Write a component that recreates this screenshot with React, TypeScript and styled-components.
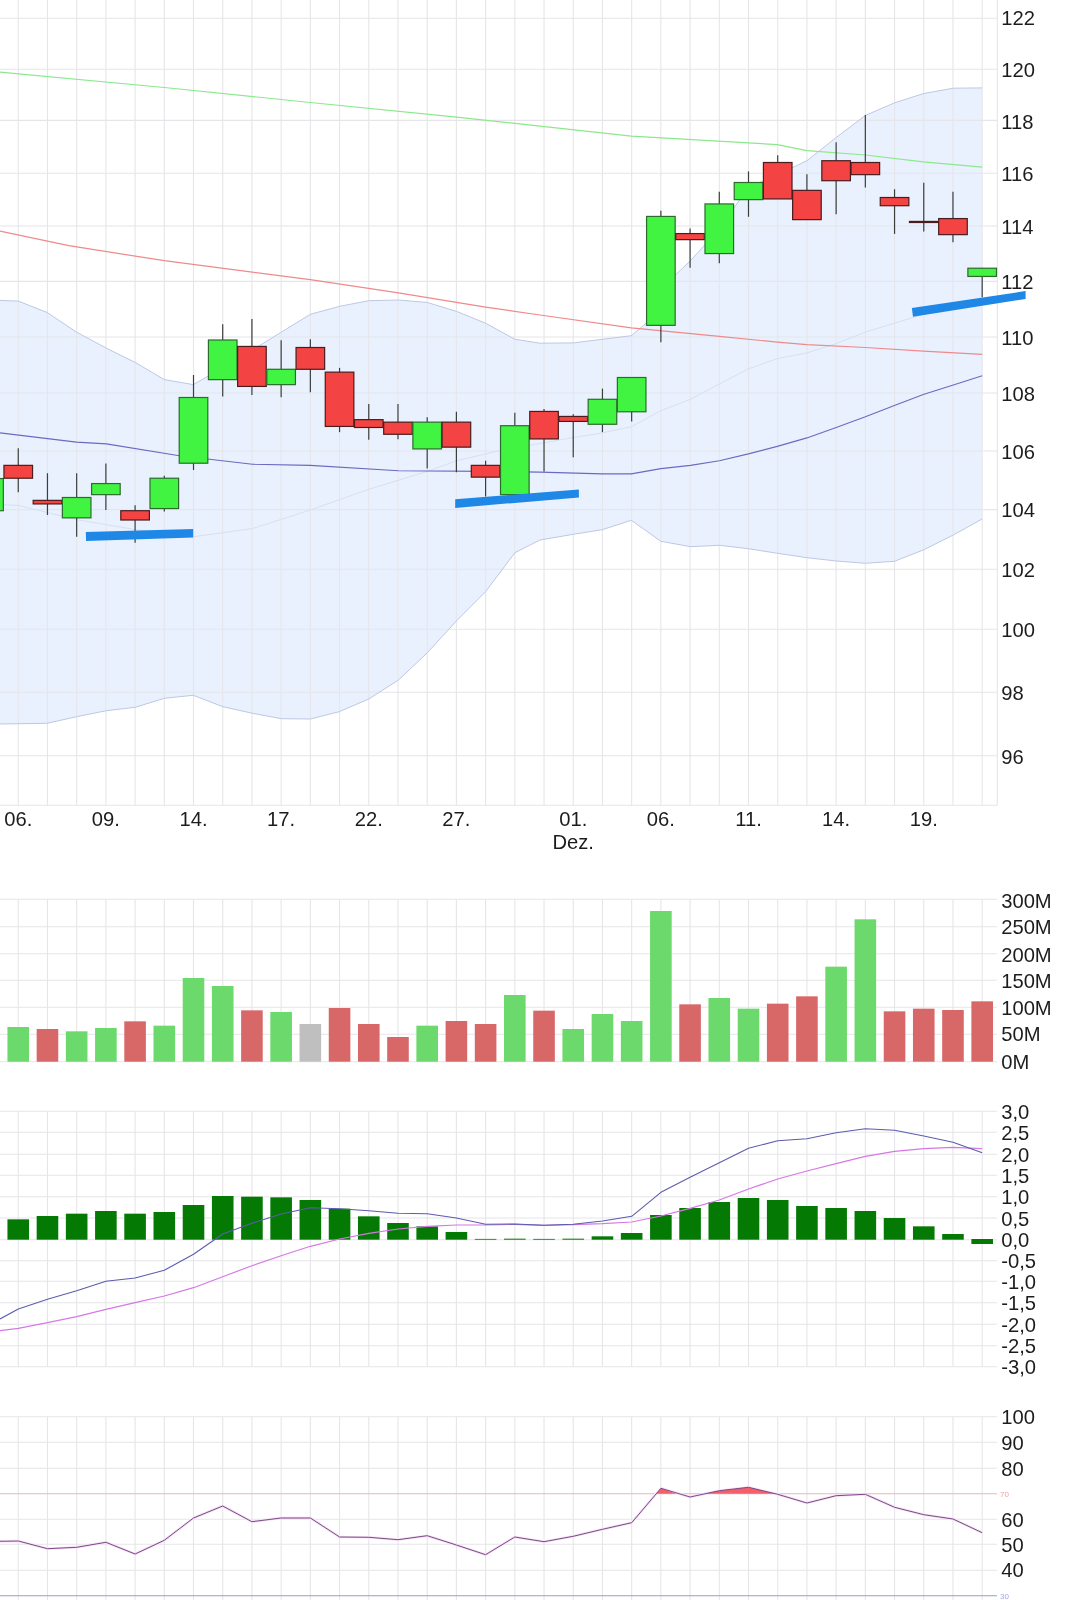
import React from "react";
import styled, { createGlobalStyle } from "styled-components";

const GlobalStyle = createGlobalStyle`
  html, body { margin: 0; padding: 0; background: #fff; }
  #root { width: 1080px; height: 1600px; overflow: hidden; }
`;

const Page = styled.main`
  display: flex;
  flex-direction: column;
  width: 1080px;
  height: 1600px;
  background: #ffffff;
`;

const Panel = styled.section<{ $height: number }>`
  flex: 0 0 ${(p) => p.$height}px;
  height: ${(p) => p.$height}px;
`;

const ChartSvg = styled.svg`
  display: block;
  width: 1080px;
  height: 100%;
  filter: blur(0.4px);
`;

const AxisLabel = styled.text`
  font-family: "Liberation Sans", Arial, sans-serif;
  font-size: 20.2px;
  fill: #1c1c1c;
`;

const TickLabel = styled(AxisLabel)`
  text-anchor: middle;
`;

const LimitLabel = styled.text<{ $color: string }>`
  font-family: "Liberation Sans", Arial, sans-serif;
  font-size: 8px;
  fill: ${(p) => p.$color};
`;

const GridLine = styled.line<{ $color?: string }>`
  stroke: ${(p) => p.$color ?? "#e6e6ea"};
  stroke-width: 1.1;
`;

const Series = styled.polyline<{ $color: string; $width?: number }>`
  fill: none;
  stroke: ${(p) => p.$color};
  stroke-width: ${(p) => p.$width ?? 1};
  stroke-linejoin: round;
`;

const Band = styled.polygon`
  fill: #e9f1fe;
`;

const Wick = styled.line`
  stroke: #3a3f3a;
  stroke-width: 1.2;
`;

const CandleBody = styled.rect<{ $up: boolean }>`
  fill: ${(p) => (p.$up ? "#42f442" : "#f44343")};
  stroke: ${(p) => (p.$up ? "#2c6b2c" : "#4a1c1c")};
  stroke-width: 1.2;
`;

const TrendStroke = styled.polygon`
  fill: #1f87e6;
`;

const VolumeBar = styled.rect<{ $kind: "u" | "d" | "n" }>`
  fill: ${(p) => (p.$kind === "u" ? "#6bd96b" : p.$kind === "d" ? "#d86868" : "#bfbfbf")};
`;

const HistBar = styled.rect`
  fill: #047a04;
`;

const Overbought = styled.polygon`
  fill: #f55f6a;
`;

type Pt = [number, number];
const X_S = 1568 / 540;
const Y_S = 2.8;
const colX = (i: number) => 18.25 + 29.21 * i;
const COLS = Array.from({ length: 34 }, (_, i) => i);

const z1 = (a: number[]): Pt[] => {
  const o: Pt[] = [];
  for (let i = 0; i < a.length; i += 2) o.push([a[i] / X_S, a[i + 1] / Y_S]);
  return o;
};
const z2 = (a: number[]): Pt[] => {
  const o: Pt[] = [];
  for (let i = 0; i < a.length; i += 2) o.push([540 + a[i] / X_S, a[i + 1] / Y_S]);
  return o;
};
const z3 = (a: number[], off: number, base = 0): Pt[] => {
  const o: Pt[] = [];
  for (let i = 0; i < a.length; i += 2) o.push([base + a[i] / X_S, off + a[i + 1] / 3]);
  return o;
};
const pts = (p: Pt[]) => p.map(([x, y]) => `${x.toFixed(1)},${y.toFixed(1)}`).join(" ");

const MAIN_GRID: [string, number, number][] = [
  ["122", 18.2, 18.6], ["120", 69.3, 70.4], ["118", 120.4, 121.8], ["116", 173.2, 174.3],
  ["114", 226, 227.5], ["112", 281.4, 282.5], ["110", 337, 338.2], ["108", 393, 394.6],
  ["106", 451, 452], ["104", 509.6, 510.7], ["102", 569.3, 570], ["100", 629.3, 630.7],
  ["98", 692.3, 693.3], ["96", 755.7, 757],
];

const TICKS: [string, number][] = [
  ["06.", 0], ["09.", 3], ["14.", 6], ["17.", 9], ["22.", 12], ["27.", 15],
  ["01.", 19], ["06.", 22], ["11.", 25], ["14.", 28], ["19.", 31],
];

const greenLine = [...z1([0,202, 477,245, 901,287, 1326,328]), ...z2([0,353, 265,381, 689,405, 775,422, 945,434, 1113,453, 1284,468])];
const redLine = [...z1([0,647, 200,688, 477,730, 901,783, 1157,820, 1410,860]), ...z2([0,882, 265,918, 521,942, 689,958, 775,965, 945,973, 1113,983, 1284,992])];
const midLine = [...z1([0,1212, 222,1238, 309,1243, 521,1276, 733,1300, 901,1303, 1157,1318, 1410,1320]), ...z2([0,1322, 181,1327, 265,1327, 351,1312, 437,1303, 521,1290, 605,1271, 689,1250, 775,1226, 860,1197, 945,1167, 1029,1135, 1113,1105, 1200,1078, 1284,1052])];
const upper = [...z1([0,841, 53,843, 137,875, 222,930, 309,975, 393,1015, 477,1063, 561,1077, 647,1030, 733,980, 817,930, 901,880, 985,858, 1071,842, 1157,840, 1241,847, 1326,872, 1410,905, 1495,950]), ...z2([0,961, 97,960, 181,950, 265,940, 351,870, 393,770, 437,730, 521,640, 605,525, 689,490, 775,450, 860,385, 945,323, 1029,288, 1113,262, 1200,247, 1284,246])];
const lower = [...z3([0,672, 137,670, 222,650, 309,632, 393,622, 477,595, 561,586, 647,620, 733,640, 817,656, 901,657, 985,635, 1071,597, 1157,540, 1241,458, 1326,362, 1410,275, 1495,158], 500), ...z3([0,120, 97,103, 181,89, 265,61, 351,124, 437,140, 521,136, 605,146, 689,160, 775,173, 860,183, 945,190, 1029,184, 1113,150, 1200,105, 1284,57], 500, 540)];
const paleLine = [...z1([0,1413, 53,1415, 137,1435, 222,1455, 393,1483, 561,1503, 733,1480, 901,1428, 1071,1370, 1241,1320, 1326,1290, 1450,1262]), ...z2([97,1225, 181,1212, 265,1195, 351,1150, 437,1118, 521,1075, 605,1033, 689,1004, 775,988, 860,962, 945,930, 1029,905, 1113,880])];

type Candle = { i: number; up: boolean; top: number; bot: number; hi: number; lo: number };
const c = (i: number, up: number, top: number, bot: number, hi: number, lo: number): Candle => ({ i, up: !!up, top: top / Y_S, bot: bot / Y_S, hi: hi / Y_S, lo: lo / Y_S });
const CANDLES: Candle[] = [
  c(-1,1,1340,1430,1340,1430), c(0,0,1303,1339,1255,1378), c(1,0,1401,1411,1325,1442), c(2,1,1393,1450,1325,1503),
  c(3,1,1354,1385,1298,1428), c(4,0,1430,1456,1415,1520), c(5,1,1339,1424,1332,1432), c(6,1,1113,1297,1050,1316),
  c(7,1,952,1063,908,1110), c(8,0,970,1082,893,1106), c(9,1,1034,1077,953,1112), c(10,0,973,1034,950,1098),
  c(11,0,1042,1194,1030,1210), c(12,0,1175,1197,1131,1231), c(13,0,1182,1216,1131,1230), c(14,1,1182,1257,1168,1312),
  c(15,0,1182,1252,1153,1322), c(16,0,1303,1336,1290,1390), c(17,1,1192,1385,1156,1400), c(18,0,1152,1229,1145,1320),
  c(19,0,1166,1180,1160,1280), c(20,1,1118,1188,1088,1210), c(21,1,1057,1153,1057,1180), c(22,1,606,911,590,958),
  c(23,0,654,671,640,750), c(24,1,571,710,537,737), c(25,1,511,559,480,607), c(26,0,455,557,435,557),
  c(27,0,533,615,488,615), c(28,0,450,506,398,600), c(29,0,455,489,322,525), c(30,0,553,576,530,655),
  c(31,0,620,623,512,648), c(32,0,612,657,537,678), c(33,1,751,774,751,832),
];

const TRENDS: Pt[][] = [
  z1([249,1490, 561,1481, 561,1505, 250,1515]),
  [[455.2, 499.3], [578.9, 489.6], [578.9, 497.5], [455.2, 507.9]],
  z2([1080,862, 1410,815, 1410,837, 1083,887]),
];

const VOL_TOPS = [441,447,454,444,424,437,294,318,391,396,432,384,432,471,437,423,432,345,392,447,402,423,93,373,354,386,371,349,260,118,394,386,390,364];
const VOL_KINDS: ("u" | "d" | "n")[] = ["u","d","u","u","d","u","u","u","d","u","n","d","d","d","u","d","d","u","d","u","u","u","u","d","u","u","d","d","u","u","d","d","d","d"];
const VOL_GRID: [string, number, number][] = [
  ["300M", 899.3, 901.3], ["250M", 926.7, 928], ["200M", 953.7, 955.3], ["150M", 980.3, 981.7],
  ["100M", 1007.3, 1008.7], ["50M", 1034.3, 1035], ["0M", 1061.7, 1062.3],
];

const MACD_GRID: [string, number][] = [
  ["3,0", 1111.3], ["2,5", 1132.3], ["2,0", 1154.3], ["1,5", 1175.3], ["1,0", 1196.7], ["0,5", 1218],
  ["0,0", 1239.7], ["-0,5", 1260.7], ["-1,0", 1281.3], ["-1,5", 1302.7], ["-2,0", 1324.3], ["-2,5", 1345.7], ["-3,0", 1366.7],
];
const HIST_TOPS = [388,378,371,363,371,366,345,318,320,322,330,356,379,399,409,426,447,446,447,446,439,429,375,354,336,324,330,348,354,363,384,409,432,447];
const MACD_V = [657,628,602,574,564,541,493,432,400,372,353,356,362,370,371,384,403,402,406,403,393,379,307,262,218,175,152,146,128,116,121,138,157,188];
const SIGNAL_V = [715,698,680,658,638,618,593,560,527,497,469,447,430,417,409,405,405,403,406,404,401,396,378,355,330,297,267,243,221,199,184,176,172,176];
const macdY = (v: number) => 1090 + v / 3;
const macdLine: Pt[] = [[0, macdY(687)], ...MACD_V.map((v, i): Pt => [colX(i), macdY(v)])];
const signalLine: Pt[] = [[0, macdY(722)], ...SIGNAL_V.map((v, i): Pt => [colX(i), macdY(v)])];

const RSI_GRID: [string, number, number][] = [
  ["100", 1416.7, 1417.7], ["90", 1442.3, 1443.3], ["80", 1468.3, 1469.3], ["60", 1519.3, 1520.3],
  ["50", 1544.3, 1545.7], ["40", 1570.3, 1571],
];
const RSI_V = [423,446,442,427,462,421,354,318,365,354,354,411,412,419,407,435,464,411,425,409,388,368,265,291,272,262,283,309,287,283,322,344,357,398];
const rsiY = (v: number) => 1400 + v / 3;
const rsiLine: Pt[] = [[0, rsiY(424)], ...RSI_V.map((v, i): Pt => [colX(i), rsiY(v)])];
const Y70 = 1493.7;
const OVER: Pt[][] = [
  [[colX(21) + 24.8, Y70], [colX(22), rsiY(265)], [colX(22) + 15.5, Y70]],
  [[colX(23) + 15, Y70], [colX(24), rsiY(272)], [colX(25), rsiY(262)], [colX(26) - 2, Y70]],
];

const VerticalGrid = ({ from, to }: { from: number; to: number }) => (
  <>
    {COLS.map((i) => (
      <GridLine key={i} x1={colX(i)} x2={colX(i)} y1={from} y2={to} />
    ))}
  </>
);

const HorizontalRule = ({ y, color }: { y: number; color?: string }) => <GridLine x1={0} x2={997} y1={y} y2={y} $color={color} />;

const PriceChart = () => (
  <ChartSvg viewBox="0 0 1080 860">
    <Band points={pts([...upper, ...[...lower].reverse()])} />
    {MAIN_GRID.map(([, y]) => <HorizontalRule key={y} y={y} />)}
    <HorizontalRule y={805.3} />
    <VerticalGrid from={0} to={805.3} />
    <GridLine x1={997.3} x2={997.3} y1={0} y2={805.3} />
    <Series points={pts(upper)} $color="#bcc8e2" />
    <Series points={pts(lower)} $color="#bcc8e2" />
    <Series points={pts(paleLine)} $color="#d6e0f0" />
    <Series points={pts(greenLine)} $color="#8ce88c" $width={1.2} />
    <Series points={pts(redLine)} $color="#ee8a8a" $width={1.2} />
    <Series points={pts(midLine)} $color="#6a6ac0" $width={1.1} />
    {CANDLES.map((k) => (
      <g key={k.i}>
        <Wick x1={colX(k.i)} x2={colX(k.i)} y1={k.hi} y2={k.lo} />
        <CandleBody x={colX(k.i) - 14.3} width={28.6} y={k.top} height={k.bot - k.top} $up={k.up} />
      </g>
    ))}
    {TRENDS.map((t, i) => <TrendStroke key={i} points={pts(t)} />)}
    {MAIN_GRID.map(([label, , cy]) => <AxisLabel key={label} x={1001.2} y={cy + 6.7}>{label}</AxisLabel>)}
    {TICKS.map(([label, i]) => <TickLabel key={i} x={colX(i)} y={825.8}>{label}</TickLabel>)}
    <TickLabel x={colX(19)} y={849}>Dez.</TickLabel>
  </ChartSvg>
);

const VolumeChart = () => (
  <ChartSvg viewBox="0 860 1080 220">
    {VOL_GRID.map(([, y]) => <HorizontalRule key={y} y={y} />)}
    <VerticalGrid from={899.3} to={1061.7} />
    {VOL_TOPS.map((t, i) => {
      const top = 880 + t / 3;
      return <VolumeBar key={i} x={colX(i) - 10.8} width={21.6} y={top} height={1061.7 - top} $kind={VOL_KINDS[i]} />;
    })}
    {VOL_GRID.map(([label, , cy]) => <AxisLabel key={label} x={1001.2} y={cy + 6.3}>{label}</AxisLabel>)}
  </ChartSvg>
);

const MacdChart = () => (
  <ChartSvg viewBox="0 1080 1080 310">
    {MACD_GRID.map(([, y]) => <HorizontalRule key={y} y={y} />)}
    <VerticalGrid from={1111.3} to={1366.7} />
    {HIST_TOPS.map((t, i) => {
      const top = 1090 + t / 3;
      const isLast = i === HIST_TOPS.length - 1;
      const h = isLast ? 5 : Math.max(1239.7 - top, 0.8);
      return <HistBar key={i} x={colX(i) - 10.8} width={21.6} y={isLast ? 1239 : 1239.7 - h} height={h} />;
    })}
    <Series points={pts(signalLine)} $color="#d678e6" $width={1.2} />
    <Series points={pts(macdLine)} $color="#5c5cae" $width={1.1} />
    {MACD_GRID.map(([label, y]) => <AxisLabel key={label} x={1001.2} y={y + 7.6}>{label}</AxisLabel>)}
  </ChartSvg>
);

const RsiChart = () => (
  <ChartSvg viewBox="0 1390 1080 210">
    {RSI_GRID.map(([, y]) => <HorizontalRule key={y} y={y} />)}
    <VerticalGrid from={1416.7} to={1600} />
    <HorizontalRule y={Y70} color="#eeb4b8" />
    <HorizontalRule y={1595.7} color="#9c9cc8" />
    <Series points={pts(rsiLine)} $color="#f6e0f6" $width={2.6} />
    {OVER.map((o, i) => <Overbought key={i} points={pts(o)} />)}
    <Series points={pts(rsiLine)} $color="#7c4a86" $width={1} />
    {RSI_GRID.map(([label, , cy]) => <AxisLabel key={label} x={1001.2} y={cy + 6.4}>{label}</AxisLabel>)}
    <LimitLabel x={1000} y={1496.6} $color="#f0a4a4">70</LimitLabel>
    <LimitLabel x={1000} y={1598.6} $color="#a4a4ec">30</LimitLabel>
  </ChartSvg>
);

export default function App() {
  return (
    <>
      <GlobalStyle />
      <Page>
        <Panel $height={860}><PriceChart /></Panel>
        <Panel $height={220}><VolumeChart /></Panel>
        <Panel $height={310}><MacdChart /></Panel>
        <Panel $height={210}><RsiChart /></Panel>
      </Page>
    </>
  );
}
